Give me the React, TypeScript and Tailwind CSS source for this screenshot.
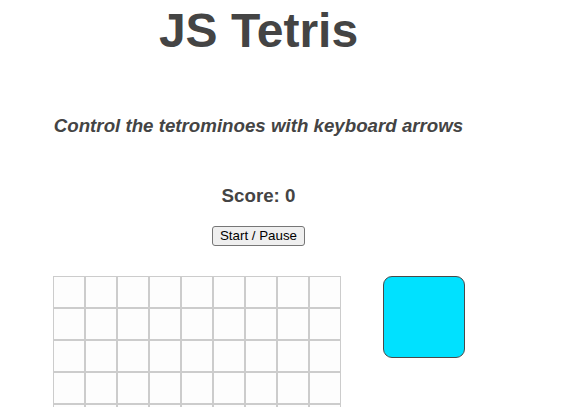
import React from 'react';

const COLS = 9;
const ROWS = 12;

export default function App() {
    const cells = Array.from({ length: COLS * ROWS }, (_, i) => i);

    return (
        <div className="w-[517px] h-screen overflow-hidden text-center text-[#444] font-['Liberation_Sans',Arial,sans-serif]">
            <h1 className="pt-[7px] text-[48px] leading-[48px] font-bold">JS Tetris</h1>

            <h3 className="mt-[60px] text-[18.72px] leading-[22px] font-bold italic">
                Control the tetrominoes with keyboard arrows
            </h3>

            <h3 className="mt-[48px] text-[18.72px] leading-[22px] font-bold">Score: 0</h3>

            <div className="mt-[19px] flex justify-center">
                <button className="h-[20px] px-[7px] text-[13.33px] leading-[18px] text-black bg-[#efefef] border border-[#767676] rounded-[3px]">
                    Start / Pause
                </button>
            </div>

            <div className="mt-[30px] pl-[53px] flex items-start gap-[42px]">
                <div className="grid grid-cols-[repeat(9,32px)] w-[288px]">
                    {cells.map((i) => (
                        <div key={i} className="w-[32px] h-[32px] border border-[#cccccc] bg-[#fdfdfd]"></div>
                    ))}
                </div>
                <div className="w-[82px] h-[82px] rounded-[9px] border border-[#4a4a4a] bg-[#00e1ff]"></div>
            </div>
        </div>
    );
}
